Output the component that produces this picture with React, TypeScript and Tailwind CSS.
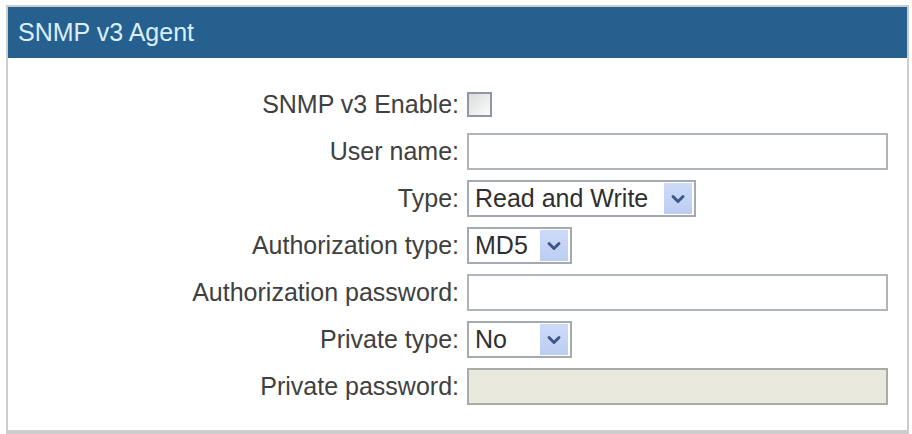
import { ChevronDown } from "lucide-react"

const font = { fontFamily: '"Liberation Sans", Arial, sans-serif' }

function Label({ text }: { text: string }) {
  return (
    <div className="w-[459px] pr-[8px] text-right text-[25px] leading-none text-[#404040]">
      {text}
    </div>
  )
}

function TextInput({ disabled = false }: { disabled?: boolean }) {
  return (
    <div
      className={`h-[37px] w-[421px] border-2 ${
        disabled ? "border-[#a9aca6] bg-[#e9e8dc]" : "border-[#b0b5ba] bg-white"
      }`}
    />
  )
}

function Select({ value, width }: { value: string; width: string }) {
  return (
    <div
      className={`flex h-[37px] ${width} items-center justify-between border-2 border-[#a3aab1] bg-white pl-[6px] pr-[2px]`}
    >
      <span className="text-[25px] leading-none text-[#2f2f2f]">{value}</span>
      <span className="flex h-[31px] w-[28px] items-center justify-center bg-gradient-to-b from-[#cddbf8] to-[#bccdf3]">
        <ChevronDown className="h-5 w-5 text-[#3d5688]" strokeWidth={3.5} />
      </span>
    </div>
  )
}

export default function App() {
  return (
    <div className="h-[434px] w-[912px] bg-white pl-[6px] pr-[3px] pt-[5px]" style={font}>
      <div className="flex h-[429px] flex-col border-x-2 border-t-2 border-b-4 border-[#cdcdcd]">
        {/* Header */}
        <div className="flex h-[51px] items-center bg-[#26608f] pl-[10px]">
          <span className="text-[25px] leading-none text-[#dbeeff]">SNMP v3 Agent</span>
        </div>

        {/* Form */}
        <div className="flex flex-col gap-[10px] pt-[28px]">
          <div className="flex h-[37px] items-center">
            <Label text="SNMP v3 Enable:" />
            <div className="h-[25px] w-[25px] border-2 border-[#8d98a4] bg-gradient-to-br from-[#dcdcdc] to-[#fbfbfb]" />
          </div>
          <div className="flex h-[37px] items-center">
            <Label text="User name:" />
            <TextInput />
          </div>
          <div className="flex h-[37px] items-center">
            <Label text="Type:" />
            <Select value="Read and Write" width="w-[229px]" />
          </div>
          <div className="flex h-[37px] items-center">
            <Label text="Authorization type:" />
            <Select value="MD5" width="w-[105px]" />
          </div>
          <div className="flex h-[37px] items-center">
            <Label text="Authorization password:" />
            <TextInput />
          </div>
          <div className="flex h-[37px] items-center">
            <Label text="Private type:" />
            <Select value="No" width="w-[105px]" />
          </div>
          <div className="flex h-[37px] items-center">
            <Label text="Private password:" />
            <TextInput disabled />
          </div>
        </div>
      </div>
    </div>
  )
}
